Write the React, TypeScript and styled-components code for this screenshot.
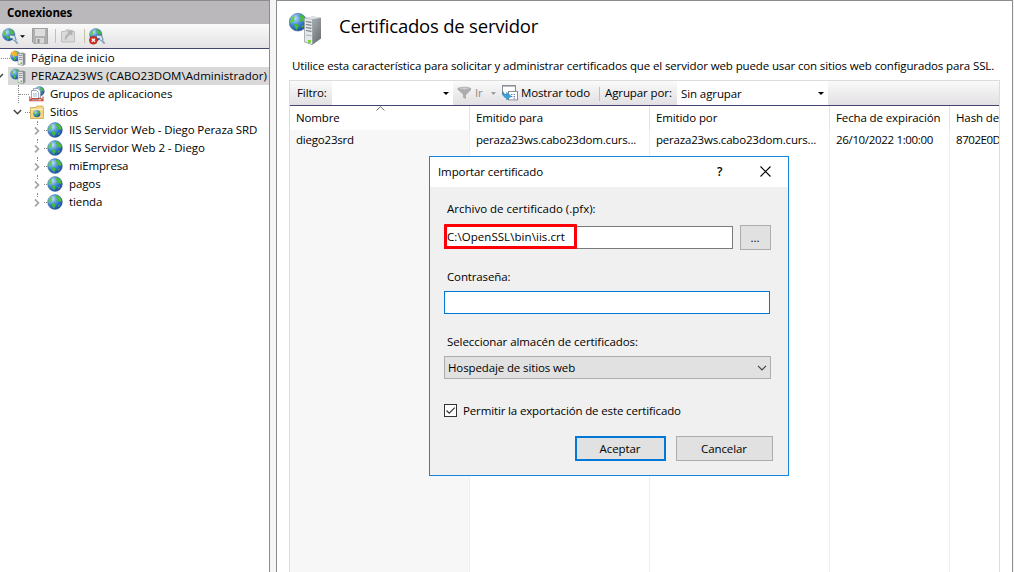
import React from 'react';
import styled, { createGlobalStyle } from 'styled-components';

const GlobalStyle = createGlobalStyle`
  * { box-sizing: border-box; }
  body {
    margin: 0;
    background: #fff;
    color: #000;
    font: 11.5px/18px "Open Sans", "Noto Sans", sans-serif;
    overflow: hidden;
  }
  svg { display: block; flex: none; }
`;

const Text = styled.span<{ $ls?: number }>`
  white-space: nowrap;
  letter-spacing: ${(p) => p.$ls ?? -0.1}px;
`;

const Window = styled.div`
  display: flex;
  width: 1014px;
  height: 572px;
  background: #f5f5f5;
`;

const Sidebar = styled.aside`
  width: 270px;
  flex: none;
  background: #fff;
  border-top: 1px solid #8c8c8c;
  border-right: 1px solid #8c8c8c;
`;

const SidebarHeader = styled.div`
  height: 23px;
  padding: 3px 7px 0;
  background: #bab8ba;
  font-weight: 700;
`;

const SidebarToolbar = styled.div`
  display: flex;
  height: 25px;
  padding: 3px 0 0 2px;
  background: linear-gradient(#fafafa, #e4e2e4);
  border-bottom: 1px solid #43456f;
`;

const ToolIcon = styled.div<{ $gap?: number; $top?: number }>`
  margin: ${(p) => p.$top ?? 0}px 0 0 ${(p) => p.$gap ?? 0}px;
`;

const Separator = styled.div<{ $gap?: number; $top?: number }>`
  width: 1px;
  height: 14px;
  margin: ${(p) => p.$top ?? 2}px 0 0 ${(p) => p.$gap ?? 0}px;
  background: #c5c2a8;
`;

const TreeRow = styled.div<{ $indent: number; $guide?: number }>`
  position: relative;
  display: flex;
  align-items: center;
  height: 18px;
  padding-left: ${(p) => p.$indent}px;

  &::before {
    content: '';
    display: ${(p) => (p.$guide ? 'block' : 'none')};
    position: absolute;
    left: ${(p) => p.$guide ?? 0}px;
    top: 0;
    height: ${(p) => (p.$guide === 18 ? 18 : 4)}px;
    border-left: 1px dotted #8a8a8a;
  }
`;

const Arrow = styled.div<{ $w?: number }>`
  width: ${(p) => p.$w ?? 12}px;
  flex: none;
`;

const Dots = styled.div<{ $w: number }>`
  width: ${(p) => p.$w}px;
  flex: none;
  border-top: 1px dotted #8a8a8a;
`;

const TreeLabel = styled.div<{ $pad?: number }>`
  display: flex;
  align-items: center;
  height: 18px;
  padding-left: ${(p) => p.$pad ?? 5}px;
`;

const Selected = styled.div`
  display: flex;
  align-items: center;
  height: 18px;
  flex: 1;
  padding-left: 2px;
  background: #d9d9d9;
`;

const Main = styled.main`
  width: 737px;
  margin-left: 6px;
  background: #fff;
  border: 1px solid #8c8c8c;
  border-bottom: 0;
  padding-left: 12px;
`;

const TitleBar = styled.header`
  display: flex;
  height: 56px;
  padding-top: 11px;
`;

const Title = styled.h1`
  margin: 0 0 0 16px;
  font-size: 18.5px;
  font-weight: 400;
  line-height: 28px;
  letter-spacing: -0.21px;
  white-space: nowrap;
`;

const Description = styled.p`
  height: 23px;
  margin: 0;
  padding-left: 3px;
`;

const Grid = styled.section`
  width: 711px;
  height: 492px;
  border: 1px solid #dcdcdc;
  border-bottom: 0;
  overflow: hidden;
`;

const FilterBar = styled.div`
  display: flex;
  height: 25px;
  background: linear-gradient(#fafafa, #e2e0e2);
  border-bottom: 1px solid #43456f;
  line-height: 23px;
`;

const Combo = styled.div<{ $w: number }>`
  display: flex;
  justify-content: space-between;
  align-items: center;
  width: ${(p) => p.$w}px;
  padding: 1px 4px 0 4px;
  background: #fff;
`;

const BarText = styled.div<{ $w: number; $pad: number; $muted?: boolean }>`
  width: ${(p) => p.$w}px;
  padding-left: ${(p) => p.$pad}px;
  color: ${(p) => (p.$muted ? '#8d8d8d' : '#000')};
`;

const BarIcon = styled.div<{ $w: number; $top: number; $left?: number }>`
  width: ${(p) => p.$w}px;
  padding: ${(p) => p.$top}px 0 0 ${(p) => p.$left ?? 0}px;
`;

const Columns = styled.div`
  display: flex;
  width: 840px;
  height: 466px;
`;

const Column = styled.div<{ $w: number }>`
  display: flex;
  flex-direction: column;
  width: ${(p) => p.$w}px;
  flex: none;
`;

const ColumnHead = styled.div`
  position: relative;
  height: 24px;
  padding: 3px 6px 0;
  border-right: 1px solid #e3e3e3;
  svg { position: absolute; left: 86px; top: 0; }
`;

const ColumnBody = styled.div<{ $sorted?: boolean }>`
  flex: 1;
  padding: 1px 6px 0;
  background: ${(p) => (p.$sorted ? '#f7f7f7' : '#fff')};
  border-right: 1px solid #e6f0fa;
`;

const Dialog = styled.div`
  position: absolute;
  left: 429px;
  top: 156px;
  width: 360px;
  height: 320px;
  background: #f0f0f0;
  border: 1px solid #1883d7;
`;

const DialogTitle = styled.div`
  display: flex;
  height: 30px;
  padding: 6px 0 0 8px;
  background: #fff;
`;

const DialogTitleText = styled.div`
  width: 279px;
`;

const HelpMark = styled.div`
  width: 43px;
  font-size: 12px;
  font-weight: 600;
`;

const DialogBody = styled.div`
  display: flex;
  flex-direction: column;
  padding: 13px 14px 0;
`;

const FieldLabel = styled.label`
  height: 25px;
  padding-left: 3px;
`;

const FieldRow = styled.div`
  position: relative;
  display: flex;
  height: 25px;
  margin-bottom: 18px;
`;

const Field = styled.div<{ $w: number; $focus?: boolean }>`
  width: ${(p) => p.$w}px;
  height: 23px;
  padding: 1px 2px;
  background: #fff;
  border: 1px solid ${(p) => (p.$focus ? '#0078d7' : '#7a7a7a')};
`;

const PathField = styled(Field)`
  margin-top: 1px;
`;

const Highlight = styled.div`
  position: absolute;
  left: 0;
  top: -1px;
  width: 133px;
  height: 25px;
  border: 3px solid #fb0007;
  border-radius: 1px;
`;

const Button = styled.button<{ $w: number; $primary?: boolean }>`
  display: flex;
  justify-content: center;
  align-items: center;
  width: ${(p) => p.$w}px;
  height: 25px;
  padding: 0 1px 0 0;
  background: #e1e1e1;
  border: ${(p) => (p.$primary ? '2px solid #0078d7' : '1px solid #adadad')};
  color: #000;
  font: inherit;
`;

const BrowseButton = styled(Button)`
  margin-left: 7px;
`;

const Select = styled.div`
  display: flex;
  justify-content: space-between;
  align-items: center;
  width: 327px;
  height: 23px;
  margin-top: -2px;
  padding: 0 3px;
  background: #e1e1e1;
  border: 1px solid #adadad;
`;

const PasswordField = styled(Field)`
  margin: -2px 0 19px;
`;

const CheckRow = styled.div`
  display: flex;
  align-items: center;
  height: 19px;
  margin: 22px 0 16px;
`;

const CheckBox = styled.div`
  width: 13px;
  height: 13px;
  margin-right: 6px;
  background: #fff;
  border: 1px solid #333;
`;

const Actions = styled.div`
  display: flex;
  gap: 10px;
  margin-left: 131px;
`;

function GlobeShape({ id }: { id: string }) {
  return (
    <>
      <defs>
        <radialGradient id={id} cx="0.32" cy="0.28" r="0.8">
          <stop offset="0" stopColor="#c3e2ff" />
          <stop offset="0.45" stopColor="#4a8fdb" />
          <stop offset="1" stopColor="#12429a" />
        </radialGradient>
      </defs>
      <circle cx="8" cy="8" r="7.4" fill={`url(#${id})`} stroke="#4a7099" strokeWidth="0.5" />
      <path d="M2.2 10 L1.4 7.4 Q2 4.4 4 3 L5.6 3.4 L4.6 5.4 L5.4 7 L3.6 7.6 Z" fill="#5fcf45" />
      <path d="M9 1.6 L11.6 2.2 L13.8 4.6 L14.5 7.4 L13 7.8 L11.8 6.8 L10.4 8 L9.2 6.4 L10.6 4.6 L8.6 3.4 Z" fill="#4dbd38" />
      <path d="M4.8 9.6 L7.2 9.4 L8.8 11 L7.8 12.8 L7 14.6 L5.8 13.2 Z" fill="#3fc02f" />
      <path d="M10.8 11.4 L13.2 10.2 L12 12.9 Z" fill="#4fb53c" />
    </>
  );
}

function Globe({ id }: { id: string }) {
  return (
    <svg width="16" height="16" viewBox="0 0 16 16">
      <GlobeShape id={id} />
    </svg>
  );
}

function ServerIcon({ id, home }: { id: string; home?: boolean }) {
  return (
    <svg width="16" height="16" viewBox="0 0 16 16">
      <g transform="translate(0 0.5) scale(0.7)"><GlobeShape id={id} /></g>
      {home && <path d="M0 1.6 L2.4 2.2 L4.4 0 L5.4 2.4 L8.2 2 L6.6 4.2 L8 6.4 L5.2 5.6 L3.4 7.4 L2.8 5 L0 4.4 L2 3.2 Z" fill="#f9b62f" />}
      <path d="M8 3.4 L12.5 2.4 L15.4 3.4 L15.4 14.4 L13 15.6 L8 14.6 Z" fill="#8b9097" />
      <path d="M8 3.6 L13 4 L13 15.5 L8 14.4 Z" fill="#eef0f2" stroke="#7c8289" strokeWidth="0.5" />
      <path d="M8.8 5.6 H12.2 M8.8 7.6 H12.2 M8.8 9.6 H12.2" stroke="#6f777f" strokeWidth="0.8" />
      <rect x="10.4" y="12.4" width="1.6" height="1.6" fill="#62c927" />
    </svg>
  );
}

function PoolsIcon() {
  return (
    <svg width="16" height="16" viewBox="0 0 16 16">
      <g transform="translate(5.2 0) scale(0.66)"><GlobeShape id="gPool" /></g>
      <path d="M4.5 2.5 H9 L11.5 5 V12 H4.5 Z" fill="#fff" stroke="#8496ad" strokeWidth="0.8" />
      <path d="M2.5 4.5 H7.5 L9.6 6.6 V13.5 H2.5 Z" fill="#fff" stroke="#8496ad" strokeWidth="0.8" />
      <path d="M4 8 H8 M4 10 H8" stroke="#7da7d8" strokeWidth="0.8" />
      <path d="M0.8 10.5 V14.8 H14 V10.5 M1 14.8 L3 12.6 H12 L14 14.8" fill="none" stroke="#c94634" strokeWidth="1.1" />
    </svg>
  );
}

function SitesIcon() {
  return (
    <svg width="14" height="16" viewBox="0 0 14 16">
      <path d="M0.5 3.5 H6 L7 2 H12.5 L13.5 3.5 V14.5 H0.5 Z" fill="#f3d583" stroke="#c9a24b" strokeWidth="0.8" />
      <path d="M1 5.4 H13" stroke="#fff3c4" />
      <g transform="translate(3.2 6) scale(0.46)"><GlobeShape id="gSites" /></g>
    </svg>
  );
}

function Chevron({ open }: { open?: boolean }) {
  return (
    <svg width="10" height="10" viewBox="0 0 10 10">
      {open ? (
        <path d="M0.8 3 L4.5 6.7 L8.2 3" fill="none" stroke="#404040" strokeWidth="1.5" />
      ) : (
        <path d="M3 2.4 L6.5 5.9 L3 9.4" fill="none" stroke="#a3a3a3" strokeWidth="1.6" />
      )}
    </svg>
  );
}

function Caret({ color = '#000', size = 6 }: { color?: string; size?: number }) {
  return (
    <svg width={size} height="3" viewBox="0 0 6 3">
      <path d="M0 0 H6 L3 3 Z" fill={color} />
    </svg>
  );
}

function ConnectIcon({ remove }: { remove?: boolean }) {
  const id = remove ? 'gDisconnect' : 'gConnect';
  return (
    <svg width="17" height="17" viewBox="0 0 17 17">
      <g transform="scale(0.84)"><GlobeShape id={id} /></g>
      <path d="M7.6 8.6 L11.6 8.6 L13 12.4" fill="none" stroke="#6d93ae" strokeWidth="3.6" strokeLinejoin="round" />
      <path d="M8 8.8 L11.4 8.9 L12.6 12" fill="none" stroke="#dfeaf1" strokeWidth="2" strokeLinejoin="round" />
      <path d="M12.6 12 L15.6 15.6" stroke="#8ca6ba" strokeWidth="2" />
      {remove && (
        <>
          <circle cx="4.4" cy="12.2" r="4" fill="#d32f22" stroke="#a31b12" strokeWidth="0.5" />
          <path d="M2.8 10.6 L6 13.8 M6 10.6 L2.8 13.8" stroke="#fff" strokeWidth="1.3" />
        </>
      )}
    </svg>
  );
}

function SaveIcon() {
  return (
    <svg width="16" height="16" viewBox="0 0 16 16">
      <path d="M0.5 0.5 H15.5 V15.5 H2 L0.5 14 Z" fill="#b0b0b0" stroke="#a0a0a0" />
      <rect x="3" y="1" width="10" height="7" fill="#dedede" />
      <rect x="4" y="10" width="8" height="5.5" fill="#d6d6d6" />
      <rect x="5.5" y="11" width="2" height="4" fill="#8e8e8e" />
    </svg>
  );
}

function UpIcon() {
  return (
    <svg width="15" height="16" viewBox="0 0 15 16">
      <path d="M0.5 4.5 H4 L5 3 H9 L10 4.5 H13.5 V15 H0.5 Z" fill="#dadada" stroke="#bdbdbd" />
      <path d="M3.6 12.4 Q4 8.4 7.4 6 L5.6 4.6 L11.6 2.6 L11.4 8.6 L9.6 7.4 Q6 9 5.4 12.4 Z" fill="#b3b3b3" />
    </svg>
  );
}

function FeatureIcon() {
  return (
    <svg width="34" height="34" viewBox="0 0 34 34">
      <g transform="translate(-0.6 0.6) scale(1.2)"><GlobeShape id="gFeature" /></g>
      <defs>
        <linearGradient id="towerSide" x1="0" y1="0" x2="1" y2="1">
          <stop offset="0" stopColor="#c3c7ca" />
          <stop offset="1" stopColor="#62686d" />
        </linearGradient>
      </defs>
      <path d="M15.5 6 L24 4.5 L32 5.8 L32 26.5 L23.5 32.8 L15.5 30 Z" fill="url(#towerSide)" />
      <path d="M15.5 6 L23.5 7.2 V32.8 L15.5 30 Z" fill="#e5e8ea" stroke="#8a9196" strokeWidth="0.6" />
      <path d="M15.5 6 L24 4.5 L32 5.8 L23.5 7.2 Z" fill="#dfe2e4" />
      <path d="M17 9.5 L22.5 10.3 M17 12.5 L22.5 13.3 M17 15.5 L22.5 16.3 M17 18.5 L22.5 19.3" stroke="#767e84" strokeWidth="1.2" />
      <path d="M17 23 L22.5 23.8" stroke="#aab0b4" strokeWidth="1" />
      <rect x="18.8" y="28" width="3" height="3" fill="#77d92e" />
    </svg>
  );
}

function FunnelIcon() {
  return (
    <svg width="15" height="14" viewBox="0 0 15 14">
      <path d="M0.5 2 Q7 -0.5 14 2 V4 L9 9 V13 L6 11.5 V8.5 L0.5 3.6 Z" fill="#adadad" />
      <path d="M2 2.2 Q7 0.8 12.5 2.2 L7.4 3.6 Z" fill="#cfcfcf" />
    </svg>
  );
}

function ShowAllIcon() {
  return (
    <svg width="17" height="16" viewBox="0 0 17 16">
      <rect x="0.5" y="0.5" width="13" height="9" fill="#fff" stroke="#8a8f96" />
      <path d="M1 1.5 H13" stroke="#b9bec5" />
      <rect x="6.5" y="6.5" width="9" height="8.4" fill="#fff" stroke="#8a8f96" />
      <path d="M9 9.5 h1.4 M11.6 9.5 h1.4 M9 11.5 h1.4 M11.6 11.5 h1.4 M11.6 13.3 h1.4" stroke="#6a78b5" strokeWidth="1.1" />
      <path d="M1 6.6 Q1.8 9.8 4.6 9.8 V7.4 L9.2 11.2 L4.6 15 V12.8 Q0.2 12.4 1 6.6 Z" fill="#37a3df" stroke="#1c76b4" strokeWidth="0.5" />
    </svg>
  );
}

const sites = [
  { name: 'IIS Servidor Web - Diego Peraza SRD', ls: -0.11 },
  { name: 'IIS Servidor Web 2 - Diego', ls: -0.07 },
  { name: 'miEmpresa', ls: -0.15 },
  { name: 'pagos', ls: -0.1 },
  { name: 'tienda', ls: -0.1 },
];

const columns = [
  { head: 'Nombre', value: 'diego23srd', width: 180, ls: -0.2 },
  { head: 'Emitido para', value: 'peraza23ws.cabo23dom.curs...', width: 180, ls: -0.19 },
  { head: 'Emitido por', value: 'peraza23ws.cabo23dom.curs...', width: 180, ls: -0.19 },
  { head: 'Fecha de expiración', value: '26/10/2022 1:00:00', width: 120, ls: -0.33 },
  { head: 'Hash de', value: '8702E0D', width: 180, ls: -0.45 },
];

export default function App() {
  return (
    <>
      <GlobalStyle />
      <Window>
        <Sidebar>
          <SidebarHeader><Text>Conexiones</Text></SidebarHeader>
          <SidebarToolbar>
            <ToolIcon $top={1}><ConnectIcon /></ToolIcon>
            <ToolIcon $gap={1} $top={8}><Caret size={5} /></ToolIcon>
            <ToolIcon $gap={7} $top={1}><SaveIcon /></ToolIcon>
            <Separator $gap={7} />
            <ToolIcon $gap={5}><UpIcon /></ToolIcon>
            <Separator $gap={8} />
            <ToolIcon $gap={4} $top={1}><ConnectIcon remove /></ToolIcon>
          </SidebarToolbar>
          <TreeRow $indent={1}>
            <Dots $w={9} />
            <ServerIcon id="gHome" home />
            <TreeLabel><Text $ls={0}>Página de inicio</Text></TreeLabel>
          </TreeRow>
          <TreeRow $indent={0}>
            <Arrow $w={8}>
              <svg width="8" height="10" viewBox="0 0 8 10">
                <path d="M-3 4 L-1 7 L3 3" fill="none" stroke="#404040" strokeWidth="1.4" />
              </svg>
            </Arrow>
            <Selected>
              <ServerIcon id="gHost" />
              <TreeLabel><Text $ls={0.04}>PERAZA23WS (CABO23DOM\Administrador)</Text></TreeLabel>
            </Selected>
          </TreeRow>
          <TreeRow $indent={19} $guide={18}>
            <Dots $w={10} />
            <PoolsIcon />
            <TreeLabel><Text>Grupos de aplicaciones</Text></TreeLabel>
          </TreeRow>
          <TreeRow $indent={13}>
            <Arrow><Chevron open /></Arrow>
            <Dots $w={5} />
            <SitesIcon />
            <TreeLabel $pad={6}><Text $ls={-0.15}>Sitios</Text></TreeLabel>
          </TreeRow>
          {sites.map((s, i) => (
            <TreeRow key={s.name} $indent={32} $guide={37}>
              <Arrow><Chevron /></Arrow>
              <Dots $w={3} />
              <Globe id={`gSite${i}`} />
              <TreeLabel $pad={6}><Text $ls={s.ls}>{s.name}</Text></TreeLabel>
            </TreeRow>
          ))}
        </Sidebar>

        <Main>
          <TitleBar>
            <FeatureIcon />
            <Title>Certificados de servidor</Title>
          </TitleBar>
          <Description>
            <Text $ls={-0.125}>
              Utilice esta característica para solicitar y administrar certificados que el servidor web puede usar con sitios web configurados para SSL.
            </Text>
          </Description>
          <Grid>
            <FilterBar>
              <BarText $w={42} $pad={7}><Text>Filtro:</Text></BarText>
              <Combo $w={121}><span /><Caret /></Combo>
              <BarIcon $w={20} $top={5} $left={4}><FunnelIcon /></BarIcon>
              <BarText $w={18} $pad={2} $muted><Text>Ir</Text></BarText>
              <BarIcon $w={11} $top={11}><Caret color="#8d8d8d" size={5} /></BarIcon>
              <BarIcon $w={19} $top={4}><ShowAllIcon /></BarIcon>
              <BarText $w={78} $pad={0}><Text $ls={-0.13}>Mostrar todo</Text></BarText>
              <Separator $top={6} />
              <BarText $w={77} $pad={5}><Text>Agrupar por:</Text></BarText>
              <Combo $w={151}><Text>Sin agrupar</Text><Caret /></Combo>
            </FilterBar>
            <Columns>
              {columns.map((c, i) => (
                <Column key={c.head} $w={c.width}>
                  <ColumnHead>
                    {i === 0 && (
                      <svg width="9" height="5" viewBox="0 0 9 5">
                        <path d="M0.5 4.5 L4.5 0.7 L8.5 4.5" fill="none" stroke="#707070" />
                      </svg>
                    )}
                    <Text $ls={-0.12}>{c.head}</Text>
                  </ColumnHead>
                  <ColumnBody $sorted={i === 0}><Text $ls={c.ls}>{c.value}</Text></ColumnBody>
                </Column>
              ))}
            </Columns>
          </Grid>
        </Main>
      </Window>

      <Dialog role="dialog">
        <DialogTitle>
          <DialogTitleText><Text>Importar certificado</Text></DialogTitleText>
          <HelpMark>?</HelpMark>
          <svg width="11" height="18" viewBox="0 0 11 18">
            <path d="M0.5 3.5 L10.5 13.5 M10.5 3.5 L0.5 13.5" stroke="#000" strokeWidth="1.1" />
          </svg>
        </DialogTitle>
        <DialogBody>
          <FieldLabel><Text $ls={0}>Archivo de certificado (.pfx):</Text></FieldLabel>
          <FieldRow>
            <PathField $w={289}><Text $ls={0.06}>C:\OpenSSL\bin\iis.crt</Text></PathField>
            <BrowseButton $w={31}>...</BrowseButton>
            <Highlight />
          </FieldRow>
          <FieldLabel><Text $ls={-0.14}>Contraseña:</Text></FieldLabel>
          <PasswordField $w={326} $focus />
          <FieldLabel><Text $ls={-0.08}>Seleccionar almacén de certificados:</Text></FieldLabel>
          <Select>
            <Text $ls={-0.12}>Hospedaje de sitios web</Text>
            <svg width="10" height="6" viewBox="0 0 10 6">
              <path d="M1 0.8 L5 4.8 L9 0.8" fill="none" stroke="#444" strokeWidth="1.2" />
            </svg>
          </Select>
          <CheckRow>
            <CheckBox>
              <svg width="11" height="11" viewBox="0 0 11 11">
                <path d="M1.5 5.5 L4.2 8.2 L9.8 2.6" fill="none" stroke="#333" strokeWidth="1.2" />
              </svg>
            </CheckBox>
            <Text $ls={-0.14}>Permitir la exportación de este certificado</Text>
          </CheckRow>
          <Actions>
            <Button $w={91} $primary><Text>Aceptar</Text></Button>
            <Button $w={97}><Text>Cancelar</Text></Button>
          </Actions>
        </DialogBody>
      </Dialog>
    </>
  );
}
